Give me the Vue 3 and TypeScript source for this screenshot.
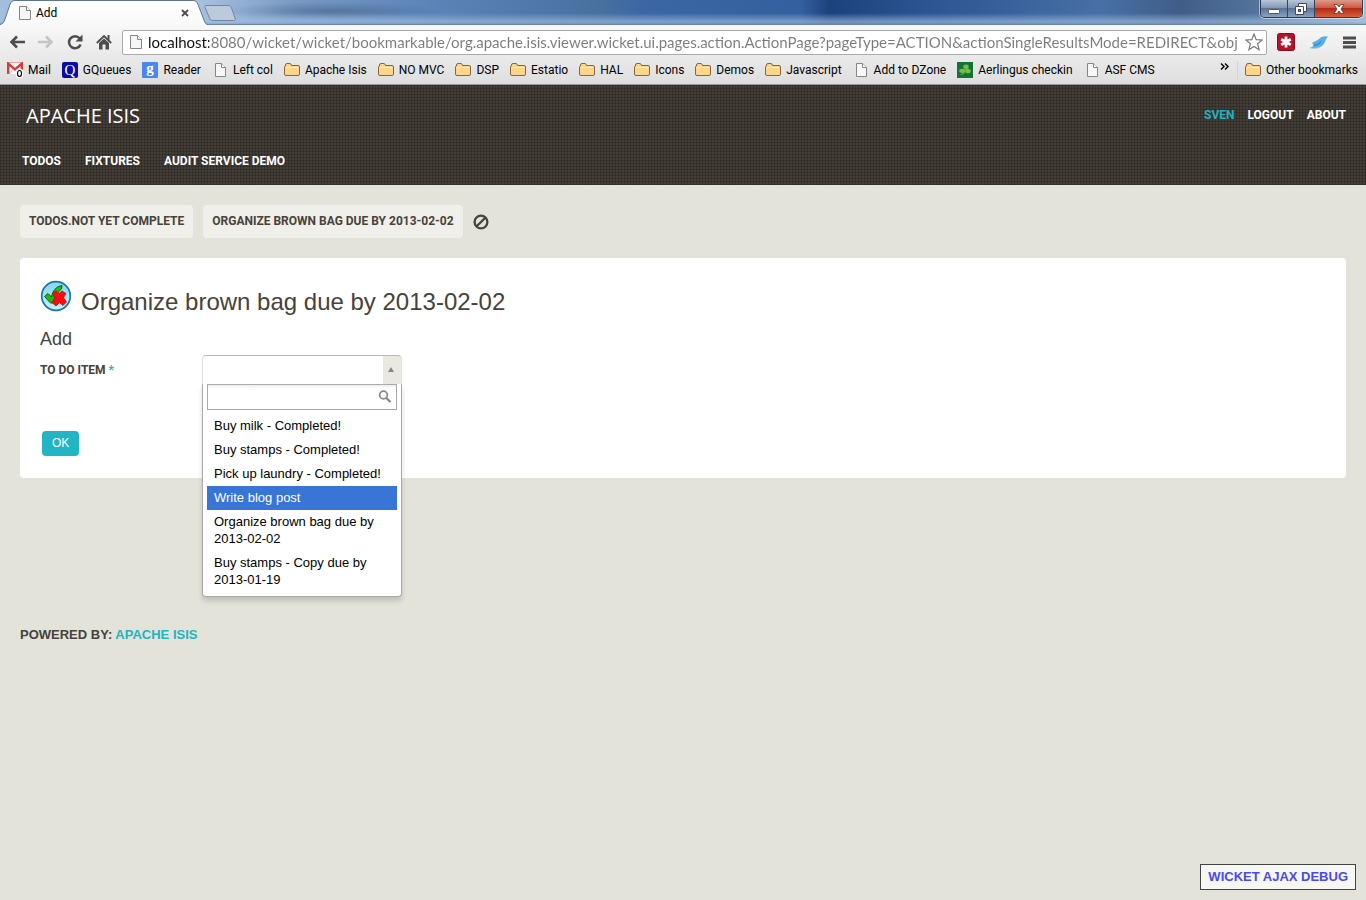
<script setup lang="ts">
import { ref } from 'vue'

type IconKind = 'mail' | 'queue' | 'reader' | 'page' | 'folder' | 'clover'

interface Bookmark {
  label: string
  icon: IconKind
}

const bookmarks: Bookmark[] = [
  { label: 'Mail', icon: 'mail' },
  { label: 'GQueues', icon: 'queue' },
  { label: 'Reader', icon: 'reader' },
  { label: 'Left col', icon: 'page' },
  { label: 'Apache Isis', icon: 'folder' },
  { label: 'NO MVC', icon: 'folder' },
  { label: 'DSP', icon: 'folder' },
  { label: 'Estatio', icon: 'folder' },
  { label: 'HAL', icon: 'folder' },
  { label: 'Icons', icon: 'folder' },
  { label: 'Demos', icon: 'folder' },
  { label: 'Javascript', icon: 'folder' },
  { label: 'Add to DZone', icon: 'page' },
  { label: 'Aerlingus checkin', icon: 'clover' },
  { label: 'ASF CMS', icon: 'page' },
]

const address = ref(
  'localhost:8080/wicket/wicket/bookmarkable/org.apache.isis.viewer.wicket.ui.pages.action.ActionPage?pageType=ACTION&actionSingleResultsMode=REDIRECT&obj',
)

const items: string[] = [
  'Buy milk - Completed!',
  'Buy stamps - Completed!',
  'Pick up laundry - Completed!',
  'Write blog post',
  'Organize brown bag due by 2013-02-02',
  'Buy stamps - Copy due by 2013-01-19',
]

const highlighted = ref(3)
const chosen = ref('')
const query = ref('')
</script>

<template>
  <div class="window">
    <div class="chrome">
      <div class="tabstrip">
        <div class="tab">
          <svg class="tab-shape" viewBox="0 0 208 25" preserveAspectRatio="none" aria-hidden="true">
            <defs>
              <linearGradient id="tabfill" x1="0" y1="0" x2="0" y2="1">
                <stop offset="0" stop-color="#ffffff" />
                <stop offset="1" stop-color="#f8f8f8" />
              </linearGradient>
            </defs>
            <path d="M0 24.5C3 24 4 22 5 19L10 4.500C11 1.500 12.500 .5 15 .5H193C196 .5 197 2 198 4.500L204 20C205 23 206 24.500 208 24.500V26H0Z" fill="url(#tabfill)" stroke="#5d7390" />
          </svg>
          <button class="tab-label" type="button">
            <svg class="icon-page" viewBox="0 0 12 14" aria-hidden="true">
              <path d="M.5 .5H7.500L11.500 4.500V13.500H.5Z" fill="#f6f6f6" stroke="#858585" />
              <path d="M7.500 .5V4.500H11.500" fill="#fff" stroke="#858585" />
            </svg>
            <span>Add</span>
          </button>
          <button class="tab-close" type="button" aria-label="Close tab">
            <svg viewBox="0 0 8 8" aria-hidden="true"><path d="M1 1L7 7M7 1L1 7" stroke="#4d4d4d" stroke-width="1.8" /></svg>
          </button>
        </div>
        <button class="new-tab" type="button" aria-label="New tab">
          <svg viewBox="0 0 32 16" aria-hidden="true">
            <path d="M3 .5H24C26 .5 27 1.500 27.500 3L31 13C31.500 14.800 31 15.500 29.500 15.500H9C7 15.500 6 14.500 5.500 13L1 2.500C.5 1.200 1 .5 3 .5Z" fill="#bccbdc" stroke="#70869f" />
          </svg>
        </button>
        <div class="window-buttons">
          <button class="win min" type="button" aria-label="Minimize">
            <svg viewBox="0 0 12 12" aria-hidden="true"><rect x=".5" y="6.500" width="11" height="4" rx="1" fill="#fff" stroke="#4b5563" /></svg>
          </button>
          <button class="win max" type="button" aria-label="Restore">
            <svg viewBox="0 0 12 12" aria-hidden="true">
              <path d="M3.500 .5H11.500V8.500H8.500V11.500H.5V3.500H3.500Z" fill="#fff" stroke="#3f4a5c" />
              <path d="M3.500 3.500H8.500V8.500" fill="none" stroke="#3f4a5c" />
              <rect x="3.500" y="6.500" width="2" height="2" fill="#6c7f9b" stroke="#3f4a5c" />
            </svg>
          </button>
          <button class="win close" type="button" aria-label="Close">
            <svg viewBox="0 0 12 12" aria-hidden="true">
              <path d="M1 1.500H4L6 4L8 1.500H11L8 6L11 10.500H8L6 8L4 10.500H1L4 6Z" fill="#fff" stroke="#5c3030" stroke-width=".8" />
            </svg>
          </button>
        </div>
      </div>

      <div class="toolbar">
        <div class="tools">
          <button class="tool" type="button" aria-label="Back">
            <svg viewBox="0 0 16 16" aria-hidden="true"><path d="M8 2.500L2.500 8L8 13.500M2.500 8H16" fill="none" stroke="#4d4d4d" stroke-width="2.600" /></svg>
          </button>
          <button class="tool" type="button" aria-label="Forward">
            <svg viewBox="0 0 16 16" aria-hidden="true"><path d="M8 2.500L13.500 8L8 13.500M13.500 8H0" fill="none" stroke="#c4c4c4" stroke-width="2.600" /></svg>
          </button>
          <button class="tool" type="button" aria-label="Reload">
            <svg viewBox="0 0 16 16" aria-hidden="true">
              <path d="M12.600 4.300A6 6 0 1 0 13.600 10.500" fill="none" stroke="#4d4d4d" stroke-width="2.500" />
              <path d="M15.500 .5V7.500H8.500Z" fill="#4d4d4d" />
            </svg>
          </button>
          <button class="tool" type="button" aria-label="Home">
            <svg viewBox="0 0 16 16" aria-hidden="true">
              <path d="M.8 9L8 2L15.200 9" fill="none" stroke="#4d4d4d" stroke-width="1.800" />
              <path d="M11.500 1H13.500V6H11.500ZM3 9L8 4.500L13 9V15.500H9.500V10.500H6.500V15.500H3Z" fill="#4d4d4d" />
            </svg>
          </button>
        </div>
        <div class="omnibox">
          <svg class="icon-page" viewBox="0 0 12 14" aria-hidden="true">
            <path d="M.5 .5H7.500L11.500 4.500V13.500H.5Z" fill="#f6f6f6" stroke="#858585" />
            <path d="M7.500 .5V4.500H11.500" fill="#fff" stroke="#858585" />
          </svg>
          <input v-model="address" class="address" type="text" aria-label="Address" spellcheck="false" />
          <button class="star" type="button" aria-label="Bookmark this page">
            <svg viewBox="0 0 18 18" aria-hidden="true">
              <path d="M9 1L11.200 6.600L17.200 7L12.600 10.800L14.100 16.700L9 13.500L3.900 16.700L5.400 10.800L.8 7L6.800 6.600Z" fill="#fff" stroke="#777" stroke-width="1.200" />
            </svg>
          </button>
        </div>
        <div class="exts">
          <button class="ext" type="button" aria-label="Password manager">
            <svg viewBox="0 0 18 18" aria-hidden="true">
              <rect x=".5" y=".5" width="17" height="17" rx="2" fill="#b5122b" stroke="#8a0d20" />
              <path d="M9 3.500V14.500M4.200 6.200L13.800 11.800M13.800 6.200L4.200 11.800" stroke="#fff" stroke-width="2.800" />
            </svg>
          </button>
          <button class="ext" type="button" aria-label="Bird">
            <svg viewBox="0 0 18 18" aria-hidden="true">
              <path d="M0 14.500C2 14.300 3 13.500 3.500 12C2.500 11.500 2.300 10.500 2.500 9.500C4.500 8.500 7 7.500 9 6C10.500 4.800 11.500 3.500 14 3.500C15.500 3 16.500 3.800 18 3.500C17 5 16 6 15.500 7.500C14.500 11.500 11 14.800 6.500 15C4 15 2 15.500 0 14.500Z" fill="#5aaee6" />
              <path d="M4 11.500C7 11.500 10 9.500 12 6.500C11.500 10.500 8 13 4 13Z" fill="#3d8bca" />
              <path d="M0 14.800C3 15.600 7 15.500 10 14" fill="none" stroke="#a9bccb" />
            </svg>
          </button>
          <button class="ext menu" type="button" aria-label="Menu">
            <svg viewBox="0 0 13 13" aria-hidden="true"><path d="M0 2H13M0 6.500H13M0 11H13" stroke="#4d4d4d" stroke-width="2.800" /></svg>
          </button>
        </div>
      </div>

      <nav class="bookmarks" aria-label="Bookmarks">
        <a v-for="b in bookmarks" :key="b.label" class="bookmark" href="#">
          <svg v-if="b.icon === 'mail'" viewBox="0 0 16 16" aria-hidden="true">
            <rect x="0" y="0" width="16" height="12" fill="#fff" />
            <path d="M1.200 12V1.500L8 7.500L14.800 1.500V8" fill="none" stroke="#d83a35" stroke-width="2.400" />
            <path d="M2 12L6 7M14 9L10 7M2 .5H14" fill="none" stroke="#e8a19e" />
            <rect x="9" y="7" width="7" height="9" rx="2" fill="#fff" />
            <ellipse cx="12.500" cy="11.500" rx="2" ry="3" fill="none" stroke="#000" stroke-width="1.200" />
          </svg>
          <svg v-else-if="b.icon === 'queue'" viewBox="0 0 16 16" aria-hidden="true">
            <rect width="16" height="16" rx="2" fill="#0b0ba6" />
            <text class="serif" x="8" y="12.500" font-size="15" text-anchor="middle" fill="#fff">Q</text>
          </svg>
          <svg v-else-if="b.icon === 'reader'" viewBox="0 0 16 16" aria-hidden="true">
            <rect width="16" height="16" rx="1" fill="#4a86ee" />
            <text class="serif" x="8" y="11" font-size="15" font-weight="bold" text-anchor="middle" fill="#fff">g</text>
          </svg>
          <svg v-else-if="b.icon === 'page'" viewBox="0 0 16 16" aria-hidden="true">
            <path d="M3.500 1.500H9.500L13.500 5.500V14.500H3.500Z" fill="#f8f8f8" stroke="#858585" />
            <path d="M9.500 1.500V5.500H13.500" fill="#fff" stroke="#858585" />
          </svg>
          <svg v-else-if="b.icon === 'clover'" viewBox="0 0 16 16" aria-hidden="true">
            <rect width="16" height="16" fill="#157237" />
            <g fill="#72bf44">
              <ellipse cx="9" cy="4.800" rx="2.700" ry="2.300" />
              <ellipse cx="5.200" cy="8.800" rx="3" ry="2.100" />
              <ellipse cx="11" cy="9" rx="2.700" ry="2.300" />
              <path d="M8 7C8 10 6 12 3 12.500C6 13.500 8.500 11 9 8Z" />
            </g>
          </svg>
          <svg v-else viewBox="0 0 16 16" aria-hidden="true">
            <path d="M1.500 4V3Q1.500 1.500 3 1.500H6Q7 1.500 7.500 3.500H14Q15.500 3.500 15.500 5V12Q15.500 13.500 14 13.500H2Q.5 13.500 .5 12V5Q.5 4 1.500 4Z" fill="#fcd68c" stroke="#8d6240" />
            <path d="M1.500 5.500H14.500" stroke="#fff0c4" />
          </svg>
          <span>{{ b.label }}</span>
        </a>
        <button class="overflow" type="button" aria-label="More bookmarks">
          <svg viewBox="0 0 9 7" aria-hidden="true"><path d="M1 .5L4 3.500L1 6.500M5 .5L8 3.500L5 6.500" fill="none" stroke="#000" stroke-width="1.400" /></svg>
        </button>
        <a class="bookmark other" href="#">
          <svg viewBox="0 0 16 16" aria-hidden="true">
            <path d="M1.500 4V3Q1.500 1.500 3 1.500H6Q7 1.500 7.500 3.500H14Q15.500 3.500 15.500 5V12Q15.500 13.500 14 13.500H2Q.5 13.500 .5 12V5Q.5 4 1.500 4Z" fill="#fcd68c" stroke="#8d6240" />
            <path d="M1.500 5.500H14.500" stroke="#fff0c4" />
          </svg>
          <span>Other bookmarks</span>
        </a>
      </nav>
    </div>

    <header class="header">
      <div class="header-top">
        <a class="brand" href="#">APACHE ISIS</a>
        <nav class="user-links" aria-label="Account">
          <a class="user" href="#">SVEN</a>
          <a href="#">LOGOUT</a>
          <a href="#">ABOUT</a>
        </nav>
      </div>
      <nav class="main-menu" aria-label="Main">
        <a href="#">TODOS</a>
        <a href="#">FIXTURES</a>
        <a href="#">AUDIT SERVICE DEMO</a>
      </nav>
    </header>

    <main class="page">
      <nav class="trail" aria-label="Visited objects">
        <a class="crumb" href="#">TODOS.NOT YET COMPLETE</a>
        <a class="crumb" href="#">ORGANIZE BROWN BAG DUE BY 2013-02-02</a>
        <button class="clear" type="button" aria-label="Clear visited objects">
          <svg viewBox="0 0 16 16" aria-hidden="true">
            <circle cx="8" cy="8" r="6.400" fill="none" stroke="#47423b" stroke-width="2.300" />
            <path d="M3.700 12.300L12.300 3.700" stroke="#47423b" stroke-width="2.300" />
          </svg>
        </button>
      </nav>

      <section class="card">
        <div class="title-row">
          <svg class="entity" viewBox="0 0 32 32" aria-hidden="true">
            <defs>
              <linearGradient id="entityfill" x1="0" y1="0" x2="0" y2="1">
                <stop offset="0" stop-color="#7fd6f5" />
                <stop offset="1" stop-color="#c8f0fc" />
              </linearGradient>
            </defs>
            <circle cx="16" cy="17" r="14.500" fill="#9aa5aa" opacity=".5" />
            <circle cx="16" cy="16" r="14.300" fill="url(#entityfill)" stroke="#1f7799" stroke-width="1.700" />
            <path d="M4.500 16.500L8 13.500L11.500 17C12.500 11 16 6.500 22 5.500L21.500 9C17 12 15 17 13 23H10.500Z" fill="#22b80c" stroke="#155f0b" />
            <path d="M12.500 13L16 11L19 13.500L22 11L26 13.500L23.500 17.500L26.500 22L23 25.500L19.500 22.500L16 26L12 22.500L14.800 18Z" fill="#f50d10" stroke="#a01a12" stroke-width=".8" />
          </svg>
          <h1>Organize brown bag due by 2013-02-02</h1>
        </div>
        <h2>Add</h2>
        <form class="form" @submit.prevent>
          <div class="field">
            <label for="todo-item">TO DO ITEM <span class="required">*</span></label>
            <div class="picker">
              <select id="todo-item" v-model="chosen">
                <option value=""></option>
                <option v-for="item in items" :key="item" :value="item">{{ item }}</option>
              </select>
              <span class="caret" aria-hidden="true"></span>
              <div class="drop">
                <div class="search">
                  <input v-model="query" type="text" aria-label="Search items" />
                  <svg viewBox="0 0 14 14" aria-hidden="true">
                    <circle cx="5.500" cy="5" r="3.900" fill="none" stroke="#8a8a8a" stroke-width="1.700" />
                    <path d="M8.300 8L12.500 12" stroke="#8a8a8a" stroke-width="2.400" />
                  </svg>
                </div>
                <ul role="listbox" aria-label="To do items">
                  <li
                    v-for="(item, i) in items"
                    :key="item"
                    role="option"
                    :aria-selected="i === highlighted"
                    :class="{ active: i === highlighted }"
                    @mouseenter="highlighted = i"
                    @click="chosen = item"
                  >{{ item }}</li>
                </ul>
              </div>
            </div>
          </div>
          <button class="ok" type="submit">OK</button>
        </form>
      </section>

      <footer class="footer">POWERED BY: <a href="#">APACHE ISIS</a></footer>
    </main>

    <a class="debug" href="#">WICKET AJAX DEBUG</a>
  </div>
</template>

<style>
body {
  background: #e3e3da;
}
</style>

<style scoped>
.window {
  min-height: 100vh;
  background: #e3e3da;
  color: #47423b;
  font-family: "Liberation Sans", Arial, sans-serif;
  font-size: 12px;
}
button,
input,
select {
  font: inherit;
  border: 0;
  padding: 0;
  margin: 0;
  background: none;
  color: inherit;
  border-radius: 0;
}
a {
  text-decoration: none;
  color: inherit;
}
svg {
  display: block;
  flex: none;
}

/* browser frame */
.chrome {
  font-family: Roboto, "Noto Sans", sans-serif;
  color: #000;
  background: linear-gradient(#f8f8f8 24px, #dedede 84px);
  border-bottom: 1px solid #999;
}
.tabstrip {
  display: flex;
  align-items: flex-start;
  height: 24px;
  border-bottom: 1px solid #6d87a8;
  background:
    linear-gradient(rgba(255, 255, 255, 0) 55%, rgba(160, 190, 225, 0.65) 90%, rgba(130, 165, 205, 0.7)),
    radial-gradient(ellipse 110px 9px at 330px 11px, rgba(50, 75, 110, 0.4), transparent),
    linear-gradient(90deg, #a4bddc 0, #a6c0e0 200px, #7698c2 300px, #5c84b8 430px, #48709f 600px, #3c67a4 640px, #34609f 800px, #1c427c 830px, #2c5592 930px, #4870a6 1100px, #405d88 1180px, #54749c 1260px, #a9bed9 100%);
}
.tab {
  position: relative;
  display: flex;
  align-items: center;
  width: 208px;
  height: 25px;
}
.tab-shape {
  position: absolute;
  inset: 0;
  width: 100%;
  height: 100%;
}
.tab-label {
  position: relative;
  display: flex;
  flex: 1;
  align-items: center;
  gap: 5px;
  padding-left: 19px;
}
.icon-page {
  width: 12px;
  height: 14px;
}
.tab-close {
  position: relative;
  margin-right: 19px;
}
.tab-close svg {
  width: 8px;
  height: 8px;
}
.new-tab {
  margin: 5px 0 0 -4px;
}
.new-tab svg {
  width: 32px;
  height: 16px;
}
.window-buttons {
  display: flex;
  margin: 0 3px 0 auto;
  border: 1px solid #2c3c54;
  border-top: 0;
  border-radius: 0 0 5px 5px;
  box-shadow: 0 0 0 1px rgba(255, 255, 255, 0.5);
  overflow: hidden;
}
.win {
  display: flex;
  align-items: center;
  justify-content: center;
  height: 17px;
  width: 27px;
  background: linear-gradient(#b8c6d8, #8699b3 45%, #5c7395 50%, #8aa2c0);
  border-right: 1px solid #34455f;
}
.win svg {
  width: 12px;
  height: 12px;
}
.win.close {
  width: 47px;
  border-right: 0;
  background: linear-gradient(#dd9a8a, #cc5a43 45%, #b42a12 50%, #d4603e);
}
.toolbar {
  display: flex;
  align-items: center;
  gap: 10px;
  height: 34px;
  padding: 0 10px 0 9px;
}
.tools {
  display: flex;
  gap: 13px;
}
.exts {
  display: flex;
  align-items: center;
  gap: 15px;
}
.tool svg {
  width: 16px;
  height: 16px;
}
.omnibox {
  display: flex;
  flex: 1;
  align-items: center;
  gap: 6px;
  min-width: 0;
  height: 23px;
  padding: 0 3px 0 7px;
  background: #fff;
  border: 1px solid #aaa;
  border-radius: 2px;
}
.address {
  flex: 1;
  min-width: 0;
  height: 23px;
  font-family: Lato, "Noto Sans", sans-serif;
  font-size: 15px;
  background: linear-gradient(90deg, #111 61px, #7c7c7c 61px);
  background-clip: text;
  -webkit-background-clip: text;
  color: transparent;
}
.star svg,
.ext svg {
  width: 18px;
  height: 18px;
}
.ext.menu svg {
  width: 13px;
  height: 13px;
}
.bookmarks {
  display: flex;
  align-items: center;
  gap: 11px;
  height: 22px;
  padding: 0 8px 3px 7px;
  font-size: 12px;
  line-height: 18px;
  white-space: nowrap;
}
.bookmark {
  display: flex;
  align-items: center;
  gap: 5px;
}
.bookmark svg {
  width: 16px;
  height: 16px;
}
.serif {
  font-family: "Liberation Serif", serif;
}
.overflow {
  margin: 0 -3px 8px auto;
}
.overflow svg {
  width: 9px;
  height: 7px;
}
.bookmark.other {
  padding-left: 7px;
  border-left: 1px solid #cfd4da;
}

/* application header */
.header {
  height: 100px;
  box-sizing: border-box;
  padding: 16px 20px 0;
  color: #fff;
  font-family: Roboto, "Liberation Sans", sans-serif;
  font-weight: bold;
  background:
    repeating-linear-gradient(90deg, rgba(24, 19, 14, 0.3) 0 1px, transparent 1px 3px),
    repeating-linear-gradient(rgba(24, 19, 14, 0.3) 0 1px, transparent 1px 3px),
    #433e37;
}
.header-top {
  display: flex;
  align-items: center;
  justify-content: space-between;
  height: 28px;
}
.brand {
  padding-left: 6px;
  font-family: "Open Sans", sans-serif;
  font-size: 20px;
  font-weight: normal;
}
.user-links {
  display: flex;
  gap: 13px;
}
.user-links .user {
  color: #22b3c1;
}
.main-menu {
  display: flex;
  gap: 24px;
  padding: 24px 2px 0;
  line-height: 16px;
}

/* page body */
.page {
  padding: 20px;
}
.trail {
  display: flex;
  align-items: center;
  gap: 10px;
}
.crumb {
  padding: 0 9px;
  font-family: Roboto, "Liberation Sans", sans-serif;
  line-height: 33px;
  font-weight: bold;
  background: #f0efea;
  border-radius: 4px;
}
.clear svg {
  width: 16px;
  height: 16px;
}
.card {
  margin-top: 20px;
  padding: 22px 20px;
  background: #fff;
  border-radius: 4px;
}
.title-row {
  display: flex;
  align-items: flex-start;
  gap: 9px;
}
.entity {
  width: 32px;
  height: 32px;
}
h1 {
  margin: 0;
  padding-top: 6px;
  font-size: 24px;
  font-weight: normal;
  line-height: 32px;
}
h2 {
  margin: 10px 0 6px;
  font-size: 18px;
  font-weight: normal;
  line-height: 22px;
}
.field {
  display: flex;
  align-items: flex-start;
  height: 75px;
}
.field label {
  width: 162px;
  font-family: Roboto, "Liberation Sans", sans-serif;
  font-weight: bold;
  line-height: 28px;
}
.required {
  color: #22b3c1;
}
.picker {
  position: relative;
  width: 200px;
}
.picker select {
  display: block;
  appearance: none;
  width: 100%;
  height: 29px;
  padding: 0 26px 0 8px;
  margin-top: -1px;
  border: 1px solid #e0e0dc;
  border-top-color: #bbb;
  border-bottom: 0;
  border-radius: 4px 4px 0 0;
  background: linear-gradient(90deg, #fff calc(100% - 18px), #e9e9e1 calc(100% - 18px));
}
.caret {
  position: absolute;
  top: 11px;
  right: 8px;
  border: 3px solid transparent;
  border-top: 0;
  border-bottom: 5px solid #888;
  pointer-events: none;
}
.drop {
  position: absolute;
  z-index: 2;
  top: 28px;
  left: 0;
  right: 0;
  padding: 0 4px 4px;
  background: #fff;
  border: 1px solid #aaa;
  border-top: 0;
  border-radius: 0 0 4px 4px;
  box-shadow: 0 4px 5px rgba(0, 0, 0, 0.15);
  color: #000;
  font-size: 13px;
}
.search {
  position: relative;
}
.search input {
  display: block;
  box-sizing: border-box;
  width: 100%;
  height: 26px;
  padding: 4px 20px 4px 5px;
  border: 1px solid #aaa;
  background: linear-gradient(#eee, #fff 15%);
}
.search svg {
  position: absolute;
  top: 6px;
  right: 5px;
  width: 14px;
  height: 14px;
}
.drop ul {
  margin: 4px 0 0;
  padding: 0;
  list-style: none;
}
.drop li {
  padding: 3px 7px 4px;
  line-height: 17px;
}
.drop li.active {
  color: #fff;
  background: #3875d7;
}
.ok {
  margin-left: 2px;
  padding: 0 10px;
  border-radius: 4px;
  background: #22b5c4;
  color: #fff;
  line-height: 25px;
}
.footer {
  margin-top: 148px;
  font-size: 13px;
  font-weight: bold;
  line-height: 18px;
}
.footer a {
  color: #22b3c1;
}
.debug {
  position: fixed;
  right: 10px;
  bottom: 10px;
  padding: 0 7px;
  border: 1px solid #444;
  background: #f6f7f2;
  color: #4a4aec;
  font-size: 13px;
  font-weight: bold;
  line-height: 24px;
}
</style>
